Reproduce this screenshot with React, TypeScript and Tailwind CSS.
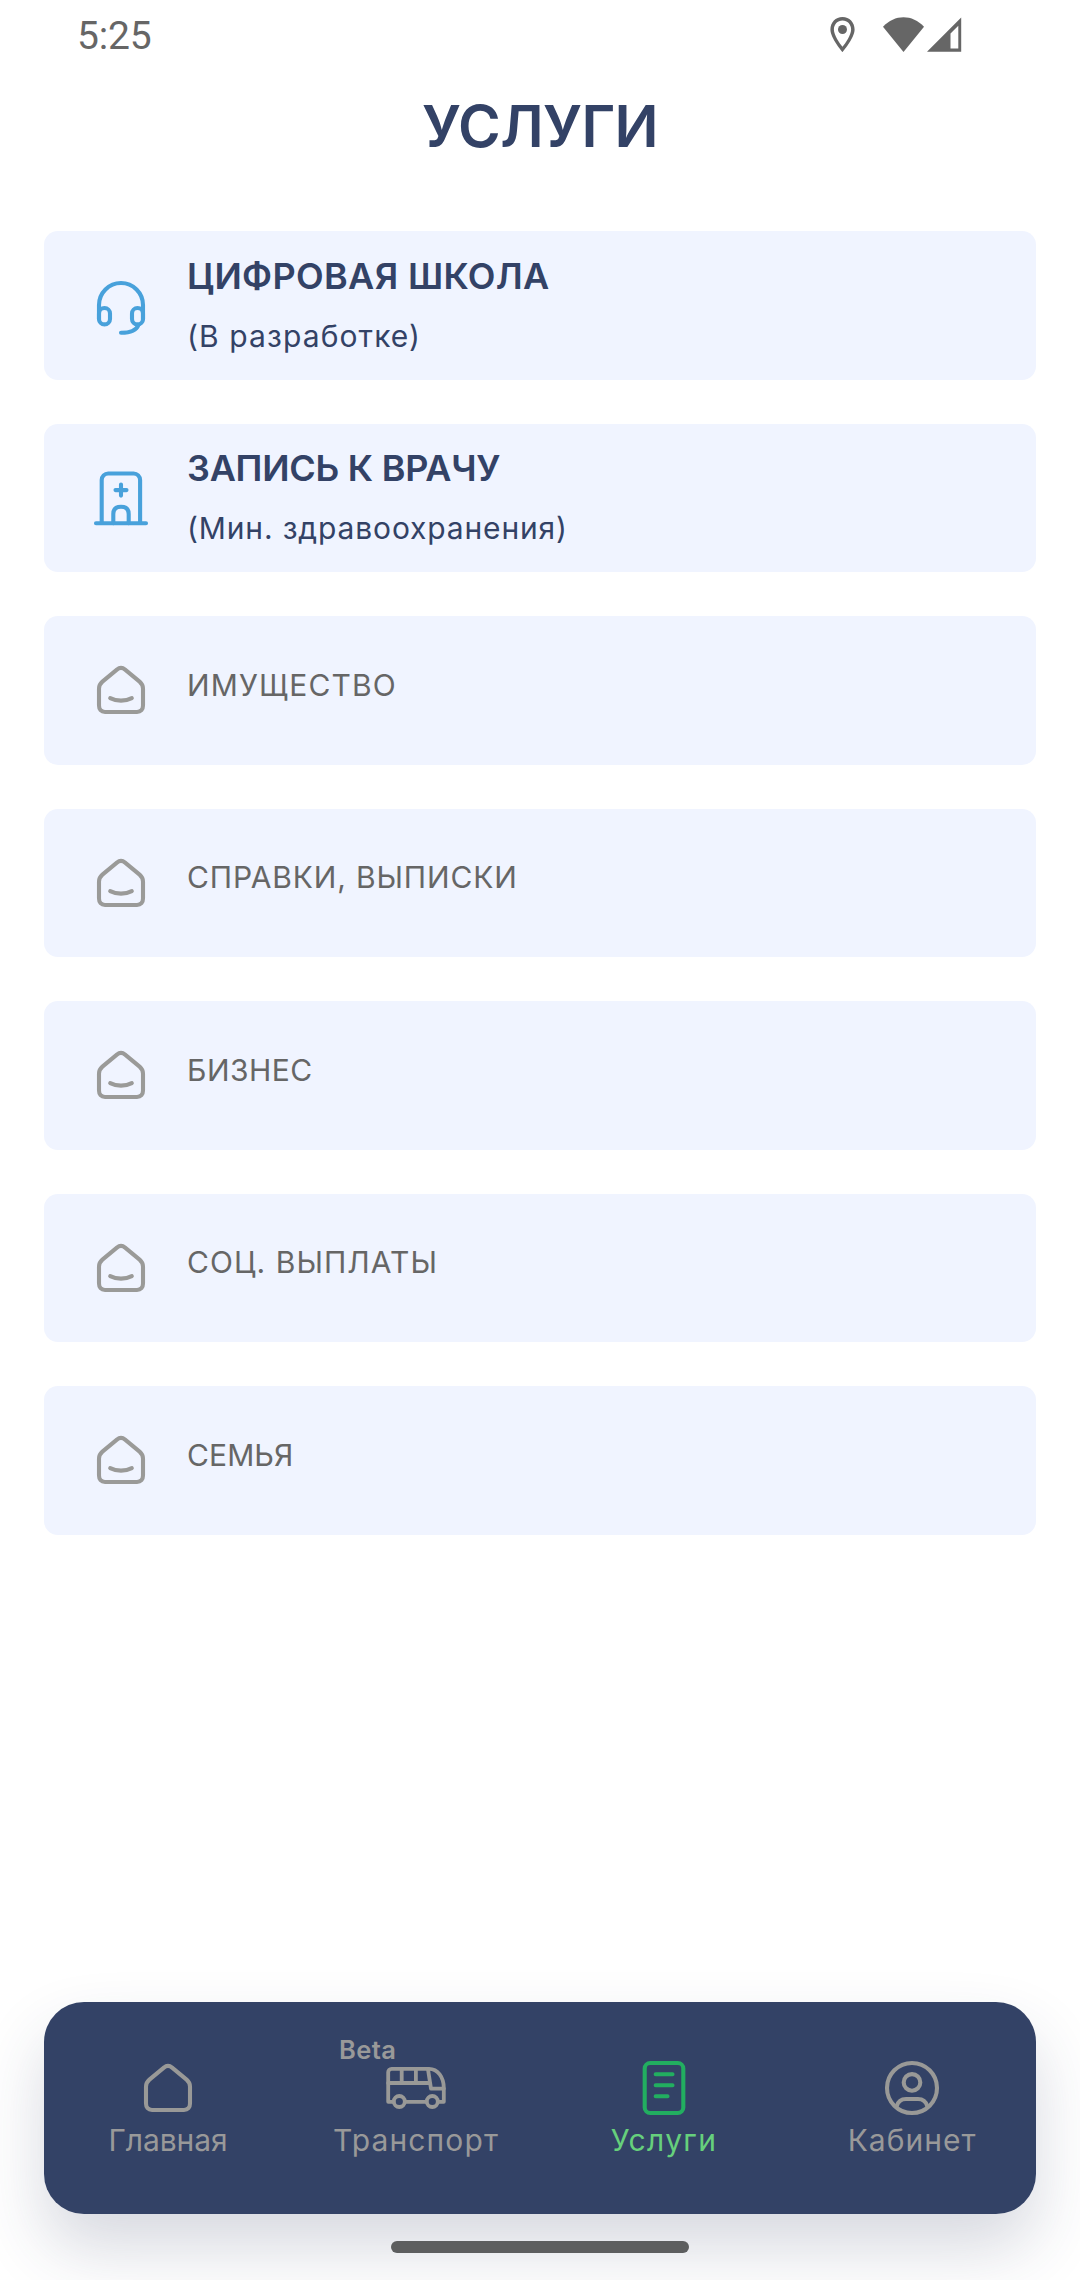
import type { ReactNode } from "react";

function Icon({ children, className, width = 4.1 }: { children: ReactNode; className: string; width?: number }) {
  return (
    <svg
      viewBox="0 0 66 66"
      fill="none"
      stroke="currentColor"
      strokeWidth={width}
      strokeLinecap="round"
      strokeLinejoin="round"
      className={`size-[66px] shrink-0 ${className}`}
    >
      {children}
    </svg>
  );
}

const housePath =
  "M28.9 9.6C31.4 7.6 34.6 7.6 37.1 9.6L51.6 21.6C54 23.7 55 25.6 55 28.6V45.6C55 49.4 52.9 52 49 52H17C13.1 52 11 49.4 11 45.6V28.6C11 25.6 12 23.7 14.4 21.6Z";

function Headset() {
  return (
    <Icon className="text-[#48a1db]">
      <path d="M11 44V30a22 22 0 0 1 44 0V44" />
      <rect x="11" y="33" width="11" height="16.4" rx="5.5" />
      <rect x="44" y="33" width="11" height="16.4" rx="5.5" />
      <path d="M33 57.8C43.5 57.8 48.6 55 50.2 50.4" />
    </Icon>
  );
}

function Hospital() {
  return (
    <Icon className="text-[#48a1db]">
      <path d="M8 55.3H58M13.7 55.3V12a6.5 6.5 0 0 1 6.5-6.5h25.4a6.5 6.5 0 0 1 6.5 6.5v43.3" />
      <path d="M33 16.6v11M27.5 22.1h11" />
      <path d="M25.3 55.3V46c0-5 2.4-7.2 7.7-7.2s7.7 2.2 7.7 7.2v9.3" />
    </Icon>
  );
}

function SmileHouse() {
  return (
    <Icon className="text-[#9a9a98]">
      <path d={housePath} />
      <path d="M22.2 38.2C28.5 41.4 37.5 41.4 43.8 38.2" />
    </Icon>
  );
}

function House() {
  return (
    <Icon className="text-[#999997]">
      <path d={housePath} />
    </Icon>
  );
}

function Bus() {
  return (
    <Icon className="text-[#999997]" width={3.8}>
      <path d="M10.6 43.8H5.2V14.2a3.4 3.4 0 0 1 3.4-3.4H46C54.8 10.8 60.8 19 60.8 30V43.8H55.2M22.2 43.8H43.4" />
      <path d="M5.2 25H46.8M18.7 10.8V25M32.9 10.8V25M44.9 10.8L48 30.6H60.8" />
      <circle cx="16.3" cy="43.5" r="5.5" />
      <circle cx="49.3" cy="43.5" r="5.5" />
    </Icon>
  );
}

function Document() {
  return (
    <Icon className="text-[#22ae60]">
      <rect x="13.7" y="5" width="38.6" height="50" rx="5.5" />
      <path d="M24.7 16.2H41.5M24.7 27.2H41.5M24.7 38.2H36.5" />
    </Icon>
  );
}

function Profile() {
  return (
    <Icon className="text-[#999997]">
      <circle cx="33" cy="30" r="25" />
      <circle cx="33" cy="24.4" r="8.3" />
      <path d="M17.6 48.4C19 43.6 22.6 41 27 41H39C43.4 41 47 43.6 48.4 48.4" />
    </Icon>
  );
}

function StatusBar() {
  return (
    <div className="flex h-[69px] items-center pr-[118px] pl-[77px] text-[#666666]">
      <span className="grow pt-1 font-[Roboto] text-[39px] leading-none tracking-[-0.2px]">5:25</span>
      <svg viewBox="0 0 25 35" className="h-[35px] w-[25px]" fill="currentColor">
        <path
          fillRule="evenodd"
          d="M12.5 0C5.5 0 .4 5.5.4 12.4.4 21 12.5 35 12.5 35S24.6 21 24.6 12.4C24.6 5.5 19.5 0 12.5 0ZM12.5 3.5C17.5 3.5 21.1 7.4 21.1 12.4 21.1 18 15.4 26.2 12.5 29.8 9.6 26.2 3.9 18 3.9 12.4 3.9 7.4 7.5 3.5 12.5 3.5Z"
        />
        <circle cx="12.5" cy="12.5" r="4.5" />
      </svg>
      <svg viewBox="0 0 41 35" className="ml-[28px] h-[35px] w-[41px]" fill="currentColor">
        <path d="M0 9.8C11.5-3 29.5-3 41 9.8L20.5 35Z" />
      </svg>
      <svg viewBox="0 0 35 35" className="ml-[3px] h-[35px] w-[35px]" fill="currentColor">
        <path fillRule="evenodd" d="M34.2.6V34.8H0ZM31.3 8.8L23.5 16.6V31.6H31.3Z" />
      </svg>
    </div>
  );
}

type Service = { title: string; icon: ReactNode; tracking: string; note?: string; noteTracking?: string };

const services: Service[] = [
  {
    title: "ЦИФРОВАЯ ШКОЛА",
    note: "(В разработке)",
    icon: <Headset />,
    tracking: "tracking-[0.35px]",
    noteTracking: "tracking-[1.1px]",
  },
  {
    title: "ЗАПИСЬ К ВРАЧУ",
    note: "(Мин. здравоохранения)",
    icon: <Hospital />,
    tracking: "tracking-[-0.25px]",
    noteTracking: "tracking-[0.85px]",
  },
  { title: "ИМУЩЕСТВО", icon: <SmileHouse />, tracking: "tracking-[1.15px]" },
  { title: "СПРАВКИ, ВЫПИСКИ", icon: <SmileHouse />, tracking: "tracking-[0.85px]" },
  { title: "БИЗНЕС", icon: <SmileHouse />, tracking: "tracking-[0.5px]" },
  { title: "СОЦ. ВЫПЛАТЫ", icon: <SmileHouse />, tracking: "tracking-[1.05px]" },
  { title: "СЕМЬЯ", icon: <SmileHouse />, tracking: "tracking-[0.1px]" },
];

function ServiceCard({ title, note, icon, tracking, noteTracking }: Service) {
  return (
    <li className="flex h-[148.5px] items-start rounded-[14px] bg-[#f0f4ff] pl-[44px]">
      <div className="pt-[44px]">{icon}</div>
      {note ? (
        <div className="pt-[14.7px] pl-[33px] text-[#334266]">
          <div className={`text-[36px] leading-[60px] font-semibold ${tracking}`}>{title}</div>
          <div className={`text-[30px] leading-[60px] ${noteTracking}`}>{note}</div>
        </div>
      ) : (
        <div className={`pt-[38.7px] pl-[33px] text-[30px] leading-[60px] text-[#666666] ${tracking}`}>{title}</div>
      )}
    </li>
  );
}

const tabs = [
  { label: "Главная", icon: <House />, style: "tracking-[-0.1px] text-[#999999]" },
  { label: "Транспорт", icon: <Bus />, badge: "Beta", style: "tracking-[1.1px] text-[#999999]" },
  { label: "Услуги", icon: <Document />, style: "tracking-[1.3px] text-[#66d07c]" },
  { label: "Кабинет", icon: <Profile />, style: "tracking-[1px] text-[#999999]" },
];

export default function App() {
  return (
    <div className="flex h-[2280px] w-[1080px] flex-col overflow-hidden bg-white font-[Inter,sans-serif]">
      <StatusBar />
      <h1 className="mt-[17px] text-center text-[58px] leading-[80px] font-semibold tracking-[-0.6px] text-[#334266]">УСЛУГИ</h1>
      <ul className="mx-[44px] mt-[65px] flex flex-col gap-[44px]">
        {services.map((s) => (
          <ServiceCard key={s.title} {...s} />
        ))}
      </ul>
      <nav className="mx-[44px] mt-auto grid h-[212px] shrink-0 grid-cols-4 rounded-[40px] bg-[#334266] shadow-[0_34px_66px_rgba(40,52,90,0.19)]">
        {tabs.map((t) => (
          <div key={t.label} className="flex flex-col items-center pt-[56px]">
            <div className="relative">
              {t.badge && (
                <span className="absolute -top-[24px] -left-[44px] text-[25.5px] leading-[32px] font-semibold tracking-[0.4px] text-[#999999]">
                  {t.badge}
                </span>
              )}
              {t.icon}
            </div>
            <span className={`text-[30px] leading-8 ${t.style}`}>{t.label}</span>
          </div>
        ))}
      </nav>
      <div className="relative mx-auto mt-[27px] mb-[27px] h-[12px] w-[298px] shrink-0 rounded-full bg-[#5d5e5f]" />
    </div>
  );
}
